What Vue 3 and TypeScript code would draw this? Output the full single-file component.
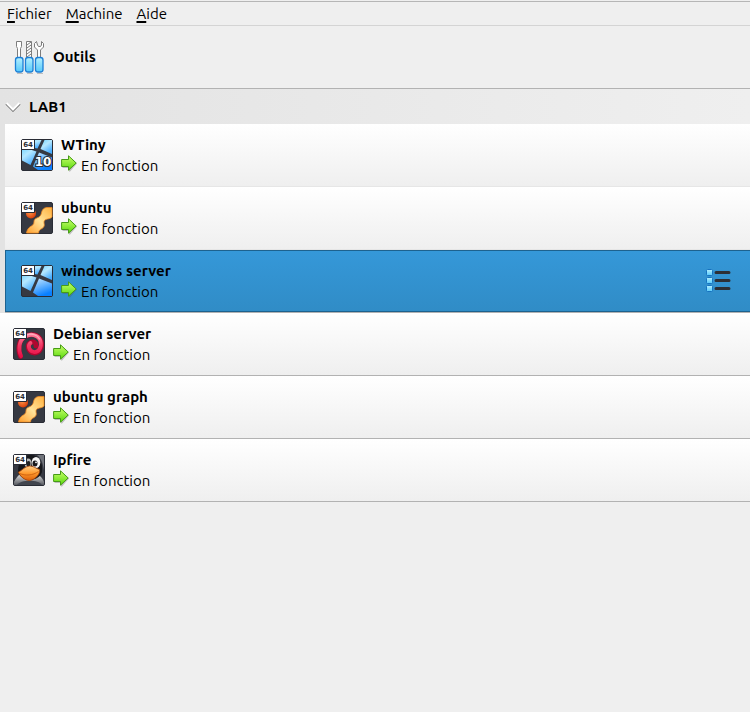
<script setup lang="ts">
import { ref } from 'vue'

type Os = 'windows10' | 'windows' | 'ubuntu' | 'debian' | 'linux'

interface Machine {
  name: string
  os: Os
}

const menus: string[] = ['Fichier', 'Machine', 'Aide']
const grouped: Machine[] = [
  { name: 'WTiny', os: 'windows10' },
  { name: 'ubuntu', os: 'ubuntu' },
  { name: 'windows server', os: 'windows' },
]
const others: Machine[] = [
  { name: 'Debian server', os: 'debian' },
  { name: 'ubuntu graph', os: 'ubuntu' },
  { name: 'Ipfire', os: 'linux' },
]
const sections = [
  { id: 'group', machines: grouped },
  { id: 'root', machines: others },
]

const open = ref(true)
const selected = ref('windows server')
</script>

<template>
  <div class="manager">
    <svg class="defs" width="0" height="0" aria-hidden="true">
      <defs>
        <linearGradient id="handle" x1="0" y1="0" x2="0" y2="1">
          <stop offset="0" stop-color="#b5f0ff" />
          <stop offset="1" stop-color="#55c8fa" />
        </linearGradient>
        <linearGradient id="pane" x1="0" y1="0" x2="0.6" y2="1">
          <stop offset="0" stop-color="#6fd4ff" />
          <stop offset="0.45" stop-color="#b5e8ff" />
          <stop offset="1" stop-color="#48adff" />
        </linearGradient>
        <linearGradient id="pane-low" x1="0" y1="0" x2="0.4" y2="1">
          <stop offset="0" stop-color="#c5e7ff" />
          <stop offset="0.5" stop-color="#6ab6ff" />
          <stop offset="1" stop-color="#0a80ff" />
        </linearGradient>
        <linearGradient id="amber" x1="1" y1="0" x2="0" y2="1">
          <stop offset="0" stop-color="#ffb03c" />
          <stop offset="0.5" stop-color="#ffe39a" />
          <stop offset="1" stop-color="#ff9e2c" />
        </linearGradient>
        <radialGradient id="ball" cx="0.4" cy="0.35" r="0.7">
          <stop offset="0" stop-color="#ff9a4a" />
          <stop offset="1" stop-color="#d93a08" />
        </radialGradient>
        <linearGradient id="swirl" x1="0" y1="0" x2="0" y2="1">
          <stop offset="0" stop-color="#ff7d9a" />
          <stop offset="0.5" stop-color="#f23a66" />
          <stop offset="1" stop-color="#e81048" />
        </linearGradient>
        <linearGradient id="beak" x1="0" y1="0" x2="0" y2="1">
          <stop offset="0" stop-color="#ffd08a" />
          <stop offset="0.5" stop-color="#ff9a2e" />
          <stop offset="1" stop-color="#d95e0a" />
        </linearGradient>
        <linearGradient id="belly" x1="0" y1="0" x2="0" y2="1">
          <stop offset="0" stop-color="#e4e4e4" />
          <stop offset="1" stop-color="#55585f" />
        </linearGradient>
        <linearGradient id="go" x1="0" y1="0" x2="0" y2="1">
          <stop offset="0" stop-color="#c8ff6a" />
          <stop offset="1" stop-color="#58d80c" />
        </linearGradient>
      </defs>
    </svg>

    <nav class="menubar">
      <button v-for="item in menus" :key="item" type="button">
        <span class="key">{{ item[0] }}</span>{{ item.slice(1) }}
      </button>
    </nav>

    <button class="tools" type="button">
      <svg class="toolset" viewBox="0 0 32 34" aria-hidden="true">
        <path d="M4 33.500h6M14 33.500h6M24 33.500h6" stroke="#aaa" opacity="0.700" />
        <g fill="#fff" stroke="#7d7d7d">
          <path d="M3.500 1.500h5v5l-1 2v9h-3v-9l-1-2z" />
          <path d="M13.500 1.500h5v16h-5z" />
          <path d="M23.500 1.500l-2 2v3.500l3 3v8h3v-8l3-3V3.500l-2-2v3.500l-1 1.500h-2l-1-1.500z" />
        </g>
        <path d="M14 5l4-3M14 8l4-3M14 11l4-3M14 14l4-3M14 17l4-3" stroke="#777" />
        <g fill="url(#handle)" stroke="#1c7fd6" stroke-width="1.300">
          <rect x="2.500" y="17.500" width="7.500" height="14.500" rx="2.500" />
          <rect x="12.500" y="17.500" width="7.500" height="14.500" rx="2.500" />
          <rect x="22.500" y="17.500" width="7.500" height="14.500" rx="2.500" />
        </g>
      </svg>
      <strong>Outils</strong>
    </button>

    <button class="group-head" type="button" :aria-expanded="open" @click="open = !open">
      <svg width="16" height="10" viewBox="0 0 16 10" aria-hidden="true">
        <path d="M1 2L8 9L15 2" fill="none" stroke="#666" stroke-width="1.500" />
        <path d="M1.500 1L8 7.500L14.500 1" fill="none" stroke="#fff" stroke-width="2" />
      </svg>
      <strong>LAB1</strong>
    </button>

    <ul v-for="section in sections" v-show="section.id === 'root' || open" :key="section.id" :class="section.id">
      <li v-for="vm in section.machines" :key="vm.name">
        <button class="machine" :class="{ selected: selected === vm.name }" type="button" @click="selected = vm.name">
          <svg class="os" viewBox="0 0 32 32" aria-hidden="true">
            <rect x="0.500" y="0.500" width="31" height="31" rx="1.500" fill="#363942" stroke="#292c35" />
            <g v-if="vm.os === 'windows' || vm.os === 'windows10'">
              <path d="M1 1h19.500l-4 8.500L1 7z" fill="url(#pane)" />
              <path d="M23.500 1H31v14l-11.500-5z" fill="url(#pane)" />
              <path d="M1 8l14.500 4.500L9.500 26L1 21.500z" fill="url(#pane)" />
              <path d="M18 13.500l13 5V31H17l-5-3.500z" fill="url(#pane-low)" />
              <text v-if="vm.os === 'windows10'" class="ten" x="22" y="27" text-anchor="middle">10</text>
            </g>
            <g v-else-if="vm.os === 'ubuntu'">
              <path d="M31 5.500h-5c-4 .3-5 3-5.500 5.500c-.7 3-2 4-4.500 5c-2.500 1-3 2-3 4c0 2.500-1.500 3.500-3.500 4.500c-2 1.300-3.500 3.500-4 6.500h12c.2-2.500 1.500-3.500 3.500-4.500c2.500-1.300 2.500-3.500 2-5.500c-.3-2.500 1-3.500 3.500-4c2-.3 3.500-.8 4.500-2z" fill="url(#amber)" stroke="#f08a24" stroke-width="0.800" />
              <circle cx="10" cy="11.500" r="5" fill="url(#ball)" />
            </g>
            <g v-else-if="vm.os === 'debian'" fill="none" stroke-linecap="round">
              <path d="M7.500 28.500C4.500 22 5.500 13 11 9C17 5 26 6 28 13C30 20 26 25.500 21 25C15 24 13.500 17 17.500 14.500C20.500 13 23.500 15 23 18" stroke="#b0062f" stroke-width="4.800" />
              <path d="M8 28C5 21.500 6 13 11.500 9C17 5 25.500 6.500 27.500 13C29.200 19.500 25.500 24.500 21 24C15.800 23 14.500 17.500 17.500 15" stroke="url(#swirl)" stroke-width="3.800" />
              <path d="M14 7C19 5 24.500 7 26.500 11" stroke="#ffb3c2" stroke-width="1.200" opacity="0.900" />
            </g>
            <g v-else>
              <path d="M1 31v-3c2-4 4-7 7-8h16c4 2 6 5 7 8v3z" fill="url(#belly)" />
              <path d="M4 31c3-5 21-6 25 0z" fill="#41454e" />
              <path d="M5 18C5 7 10 1 18 1s12 7 11 17c-3 10-20 11-24 0z" fill="#16171b" />
              <path d="M24 1h7v15c-1-7-3-12-7-15z" fill="#70737a" />
              <ellipse cx="15" cy="9" rx="3.500" ry="4.500" fill="#bbb" />
              <ellipse cx="15.500" cy="10" rx="2" ry="3" fill="#222" />
              <ellipse cx="23" cy="8.500" rx="4.300" ry="5.500" fill="#f6f6f6" />
              <ellipse cx="22" cy="9.500" rx="2.500" ry="3" fill="#17181c" />
              <circle cx="23" cy="8.300" r="0.900" fill="#fff" />
              <path d="M5.500 18c3-1 6-5.500 11-6c4-.3 6 2.500 10 3.500c1 5-5 10.500-10 11C12 26.500 7 22.500 5.500 18z" fill="url(#beak)" stroke="#a84206" stroke-width="0.800" />
              <path d="M7 19.500c5 2.500 13 2 18.500-2" fill="none" stroke="#c65a0c" stroke-width="0.800" />
            </g>
            <path d="M1 1h12v9H1z" fill="#fff" />
            <path d="M13.500 1v9.500H1" fill="none" stroke="#292c35" />
            <text class="bits" x="7" y="8" text-anchor="middle">64</text>
          </svg>
          <span class="info">
            <strong>{{ vm.name }}</strong>
            <span class="state">
              <svg width="16" height="17" viewBox="0 0 16 17" aria-hidden="true">
                <path d="M1.500 5.500h6V2L16 8.500L9 16.500H8V13H1.500z" fill="#555" opacity="0.350" />
                <path d="M.6 4.500h6.900V.8l7.700 7.200l-7.700 7.200V11.500H.6z" fill="url(#go)" stroke="#479b17" stroke-linejoin="round" />
              </svg>
              En fonction
            </span>
          </span>
          <svg v-if="selected === vm.name" class="details" width="26" height="24" viewBox="0 0 26 24" aria-hidden="true">
            <g fill="url(#handle)" stroke="#1673c0">
              <rect x="1.500" y="0.500" width="6" height="6" rx="1" />
              <rect x="1.500" y="8.500" width="6" height="6" rx="1" />
              <rect x="1.500" y="16.500" width="6" height="6" rx="1" />
            </g>
            <path d="M11 3.500h13M11 11.500h13M11 19.500h13" stroke="#2d3036" stroke-width="3" stroke-linecap="round" />
          </svg>
        </button>
      </li>
    </ul>
  </div>
</template>

<style>
body {
  background: #efefef;
}
</style>

<style scoped>
.manager {
  min-height: 100vh;
  background: #efefef;
  color: #000;
  font: 15px/21px "Ubuntu", "Noto Sans", sans-serif;
}

.defs {
  position: absolute;
}

button {
  margin: 0;
  border: 0;
  padding: 0;
  background: none;
  color: inherit;
  font: inherit;
  text-align: left;
}

.menubar {
  display: flex;
  gap: 14px;
  box-sizing: border-box;
  height: 26px;
  padding: 2px 7px 0;
  border-bottom: 1px solid #d4d4d4;
  background: linear-gradient(#efefef 1px, #b6b6b6 1px, #b6b6b6 2px, #efefef 2px);
}

.key {
  text-decoration: underline;
  text-decoration-thickness: 2px;
  text-underline-offset: 2px;
}

.tools {
  display: flex;
  align-items: center;
  gap: 8px;
  box-sizing: border-box;
  width: 100%;
  height: 63px;
  padding: 0 13px 1px;
  border-bottom: 1px solid #b2b2b2;
}

.group-head {
  display: flex;
  align-items: center;
  gap: 8px;
  width: 100%;
  height: 35px;
  padding: 0 5px;
  background: linear-gradient(90deg, #e3e3e3, #efefef);
}

ul {
  margin: 0;
  padding: 0;
  list-style: none;
}

.group {
  padding-left: 5px;
  background: #e3e3e3;
}

.machine {
  display: flex;
  align-items: center;
  gap: 8px;
  box-sizing: border-box;
  width: 100%;
  height: 63px;
  padding: 0 19px 0 13px;
  border-bottom: 1px solid #b2b2b2;
  background: linear-gradient(#fff, #efefef);
}

.group .machine {
  padding-left: 16px;
  border-bottom-color: #e6e6e6;
}

.group .machine.selected,
.machine.selected {
  border-bottom-color: #b2b2b2;
  background: linear-gradient(#3598d9, #308cc6);
  background-clip: padding-box;
  box-shadow: inset 1px 1px #1d628f, inset 0 -1px #1d628f;
}

.toolset {
  flex: none;
  width: 32px;
  height: 34px;
}

.os {
  flex: none;
  width: 32px;
  height: 32px;
}

.info {
  display: flex;
  flex: 1;
  flex-direction: column;
}

.state {
  display: flex;
  gap: 4px;
}

.bits {
  font: bold 7px "DejaVu Sans", sans-serif;
  fill: #292c35;
}

.ten {
  font: bold 12px "DejaVu Sans", sans-serif;
  fill: #fff;
  stroke: #292c35;
  stroke-width: 2px;
  paint-order: stroke;
}
</style>
